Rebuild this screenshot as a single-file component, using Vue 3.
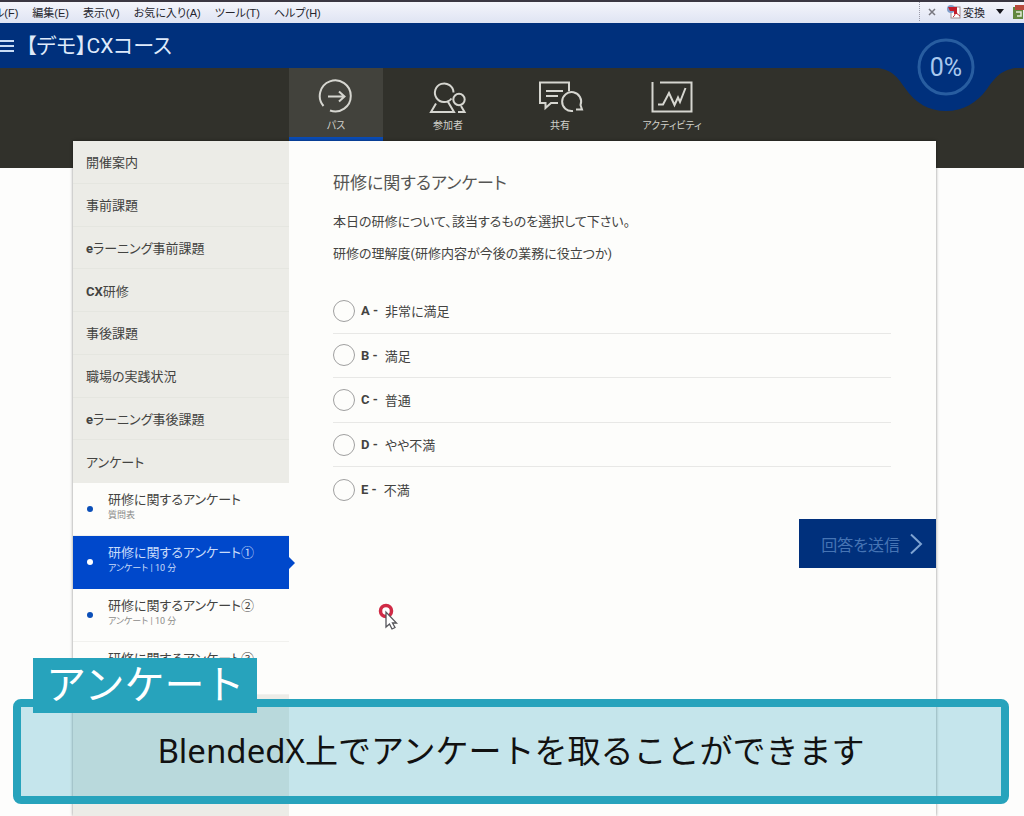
<script setup>
import { ref } from 'vue'

const menus = ['ル(F)', '編集(E)', '表示(V)', 'お気に入り(A)', 'ツール(T)', 'ヘルプ(H)']
const tabs = [
  { id: 'path', label: 'パス' },
  { id: 'people', label: '参加者' },
  { id: 'share', label: '共有' },
  { id: 'activity', label: 'アクティビティ' },
]
const sections = [
  { text: '開催案内' },
  { text: '事前課題' },
  { lead: 'e', text: 'ラーニング事前課題' },
  { lead: 'CX', text: '研修' },
  { text: '事後課題' },
  { text: '職場の実践状況' },
  { lead: 'e', text: 'ラーニング事後課題' },
  { text: 'アンケート' },
]
const lessons = [
  { title: '研修に関するアンケート', meta: '質問表' },
  { title: '研修に関するアンケート①', meta: 'アンケート | 10 分' },
  { title: '研修に関するアンケート②', meta: 'アンケート | 10 分' },
  { title: '研修に関するアンケート③', meta: '' },
]
const options = [
  { key: 'A', text: '非常に満足' },
  { key: 'B', text: '満足' },
  { key: 'C', text: '普通' },
  { key: 'D', text: 'やや不満' },
  { key: 'E', text: '不満' },
]
const activeTab = ref('path')
const activeLesson = ref(1)
const answer = ref('')
</script>

<template>
  <div class="page">
    <div class="menubar">
      <nav class="menus">
        <button v-for="m in menus" :key="m" type="button">{{ m }}</button>
      </nav>
      <div class="tools">
        <button type="button" class="close" aria-label="閉じる">
          <svg width="8" height="8" viewBox="0 0 8 8"><path d="M1 1L7 7M7 1L1 7" stroke="#77777f" stroke-width="1.5" /></svg>
        </button>
        <button type="button" class="convert">
          <svg width="16" height="16" viewBox="0 0 16 16">
            <rect x="5" y="3" width="9" height="11" fill="#fff" stroke="#a08c90" />
            <circle cx="5" cy="5" r="4" fill="#7f9fcb" />
            <path d="M2 3H11V10H8V7H4Z" fill="#c21d2b" />
            <path d="M7 13C10 11 9 7 10 6C10 9 12 11 14 12" fill="none" stroke="#c21d2b" />
          </svg>
          <span>変換</span>
        </button>
        <button type="button" class="drop" aria-label="メニュー">
          <svg width="8" height="5" viewBox="0 0 8 5"><path d="M0 0H8L4 5Z" fill="#15151c" /></svg>
        </button>
        <svg class="edge" width="12" height="16" viewBox="0 0 12 16">
          <rect x="1" y="3" width="10" height="12" fill="#62883f" />
          <path d="M3 1H12V6H3Z" fill="#b8493c" />
          <path d="M4 8H9V12H5" fill="none" stroke="#e4ead9" stroke-width="1.5" />
        </svg>
      </div>
    </div>

    <header class="header">
      <button type="button" class="burger" aria-label="メニューを開く">
        <svg width="14" height="14" viewBox="0 0 14 14"><path d="M0 2H14M0 7H14M0 12H14" stroke="#c9dcf4" stroke-width="2" /></svg>
      </button>
      <h1>【デモ】CXコース</h1>
    </header>

    <div class="band">
      <div class="progress">
        <svg width="156" height="76" viewBox="0 0 156 76">
          <path d="M0 0V32C22 33 27 40 36 53C46 68 60 76 77 76C94 76 108 68 118 54C128 40 134 33 156 32V0Z" fill="#00307c" />
          <circle cx="77" cy="32" r="27" fill="none" stroke="#285da0" stroke-width="3" />
        </svg>
        <span>0%</span>
      </div>
      <nav class="tabs">
        <button v-for="t in tabs" :key="t.id" type="button" :class="{ on: activeTab === t.id }" @click="activeTab = t.id">
          <svg v-if="t.id === 'path'" width="44" height="36" viewBox="0 0 44 36">
            <path d="M9.500 28A15.500 15.500 0 1 1 16 32.500M14 18.500H30M25 13.500L30.500 18.500L25 23.500" />
          </svg>
          <svg v-else-if="t.id === 'people'" width="44" height="36" viewBox="0 0 44 36">
            <path d="M25.500 20.500A9.300 9.300 0 1 1 27.500 14.500M10 25.500L5 34H28L21.500 23" />
            <circle cx="33" cy="21.500" r="5.700" />
            <path d="M35 28L38.500 34H32" />
          </svg>
          <svg v-else-if="t.id === 'share'" width="48" height="36" viewBox="0 0 48 36">
            <path d="M22 25H15L9.500 30V25H4V4.500H33V13M10 13H27M10 18H22" />
            <path d="M37 33A9.500 9.500 0 1 1 44.500 27L46 31.500H40" />
          </svg>
          <svg v-else width="44" height="36" viewBox="0 0 44 36">
            <path d="M2.500 4V33.500H41.500V4.500H10M8 26.500H13L19 15L24.500 27L28 19.500L30 24L35.500 10" />
          </svg>
          <span>{{ t.label }}</span>
        </button>
      </nav>
    </div>

    <main class="panel">
      <aside class="side">
        <ul class="sections">
          <li v-for="s in sections" :key="s.text"><a href="#"><b v-if="s.lead">{{ s.lead }}</b>{{ s.text }}</a></li>
        </ul>
        <ul class="lessons">
          <li v-for="(l, i) in lessons" :key="l.title" :class="{ on: activeLesson === i }">
            <a href="#" @click.prevent="activeLesson = i">
              <i class="dot"></i>
              <span class="txt"><span class="ttl">{{ l.title }}</span><span class="meta">{{ l.meta }}</span></span>
            </a>
          </li>
        </ul>
      </aside>
      <form class="survey" @submit.prevent>
        <div class="body">
          <h2>研修に関するアンケート</h2>
          <p>本日の研修について、該当するものを選択して下さい。</p>
          <p>研修の理解度(研修内容が今後の業務に役立つか)</p>
          <div class="options">
            <label v-for="o in options" :key="o.key">
              <input v-model="answer" type="radio" name="answer" :value="o.key" />
              <b>{{ o.key }} -</b>
              <span>{{ o.text }}</span>
            </label>
          </div>
        </div>
        <button type="submit" class="send">
          <span>回答を送信</span>
          <svg width="14" height="22" viewBox="0 0 14 22"><path d="M2 1.500L12 11L2 20.500" fill="none" stroke="#7ea3d2" stroke-width="2" /></svg>
        </button>
      </form>
    </main>

    <svg class="cursor" width="22" height="30" viewBox="0 0 22 30">
      <circle cx="8" cy="8" r="5.500" fill="#fff" stroke="#d02a45" stroke-width="3.500" />
      <path d="M8 9V24L11.500 21L14 26L17 24.500L14.500 20H18.500Z" fill="#fff" stroke="#55555a" stroke-width="1.300" />
    </svg>

    <div class="caption">
      <strong>アンケート</strong>
      <p>BlendedX上でアンケートを取ることができます</p>
    </div>
  </div>
</template>

<style>
body {
  background: #fdfdfc;
}
</style>

<style scoped>
.page {
  position: relative;
  display: flex;
  flex-direction: column;
  height: 100vh;
  overflow: hidden;
  font-family: Roboto, "Noto Sans CJK JP", sans-serif;
  font-feature-settings: "palt";
  font-size: 13px;
  color: #434341;
}
button {
  display: flex;
  align-items: center;
  margin: 0;
  padding: 0;
  border: 0;
  background: none;
  font: inherit;
  font-feature-settings: inherit;
  color: inherit;
}
a {
  color: inherit;
  text-decoration: none;
}
ul {
  margin: 0;
  padding: 0;
  list-style: none;
}
.menubar {
  display: flex;
  justify-content: space-between;
  flex: none;
  height: 23px;
  box-sizing: border-box;
  border-top: 2px solid #3b3742;
  padding-bottom: 2px;
  background: linear-gradient(#f4f5fb, #dfe4f3);
  font-family: "Liberation Sans", "Noto Sans CJK JP", sans-serif;
  font-size: 11px;
  color: #25252d;
}
.menus {
  display: flex;
  gap: 14px;
  margin-left: -6px;
}
.tools {
  display: flex;
  align-items: center;
  border-left: 1px dotted #9a9aa8;
  padding-left: 8px;
}
.convert {
  gap: 1px;
  margin-left: 10px;
}
.drop {
  margin-left: 11px;
}
.edge {
  margin-left: 8px;
}
.header {
  display: flex;
  align-items: center;
  flex: none;
  height: 45px;
  background: #00307c;
  color: #dfeafa;
}
.header h1 {
  margin: 0 0 0 12px;
  font-size: 21px;
  font-weight: 400;
  line-height: 28px;
}
.band {
  position: relative;
  flex: none;
  height: 100px;
  background: #31312b;
}
.progress {
  position: absolute;
  right: -1px;
  top: -33px;
  width: 156px;
  height: 76px;
}
.progress svg {
  display: block;
}
.progress span {
  position: absolute;
  left: 0;
  top: 17px;
  width: 154px;
  text-align: center;
  font-size: 25px;
  line-height: 32px;
  color: #a9c8ee;
}
.tabs {
  display: flex;
  gap: 18px;
  padding-left: 289px;
}
.tabs button {
  flex-direction: column;
  width: 94px;
  height: 73px;
  box-sizing: border-box;
  padding-top: 10px;
  border-bottom: 4px solid transparent;
  font-size: 10px;
  line-height: 16px;
  color: #d2d2cc;
  white-space: nowrap;
}
.tabs button span {
  margin-top: 4px;
}
.tabs button.on {
  background: #42423c;
  border-bottom-color: #0a4bb5;
}
.tabs svg {
  flex: none;
  fill: none;
  stroke: #d6d6d0;
  stroke-width: 2;
}
.panel {
  position: relative;
  display: flex;
  flex: 1;
  margin: -27px 88px 0 73px;
  background: #fdfdfb;
  box-shadow: 0 0 3px rgba(0, 0, 0, 0.45);
}
.side {
  flex: none;
  width: 216px;
  background: #ecece7;
}
.sections {
  display: grid;
  grid-auto-rows: 1fr;
  min-height: 342px;
}
.sections li {
  display: flex;
  align-items: center;
  padding-left: 13px;
  border-bottom: 1px solid #e5e6e0;
}
.sections li:last-child {
  border-bottom: 0;
}
.lessons li {
  position: relative;
  height: 53px;
  box-sizing: border-box;
  background: #fdfdfb;
  border-bottom: 1px solid #f1f1ee;
}
.lessons a {
  display: flex;
  align-items: center;
  gap: 15px;
  height: 100%;
  padding-left: 14px;
}
.dot {
  width: 6px;
  height: 6px;
  border-radius: 50%;
  background: #0b4fb8;
}
.txt {
  display: flex;
  flex-direction: column;
  padding-bottom: 6px;
}
.ttl {
  font-size: 13px;
  line-height: 18px;
}
.meta {
  min-height: 12px;
  font-size: 9px;
  line-height: 12px;
  color: #8c8c8a;
}
.lessons .on {
  background: #0048cb;
  border-color: #0048cb;
  color: #c9dcfa;
}
.lessons .on .meta {
  color: #c9dcfa;
}
.lessons .on .dot {
  background: #fff;
}
.lessons .on::after {
  content: "";
  position: absolute;
  left: 100%;
  top: 21px;
  border: 6px solid transparent;
  border-right-width: 0;
  border-left-color: #0048cb;
}
.survey {
  display: flex;
  flex-direction: column;
  flex: 1;
}
.body {
  padding: 29px 45px 7px 44px;
}
h2 {
  margin: 0 0 14px;
  font-size: 17px;
  font-weight: 400;
  line-height: 26px;
  color: #555553;
}
.body p {
  margin: 0 0 8px;
  line-height: 24px;
}
.options {
  display: grid;
  grid-auto-rows: 1fr;
  min-height: 223px;
  margin-top: 23px;
}
.options label {
  display: flex;
  align-items: center;
  border-bottom: 1px solid #e8e8e6;
}
.options label:last-child {
  border-bottom: 0;
}
.options input {
  appearance: none;
  width: 22px;
  height: 22px;
  margin: 0 6px 0 0;
  box-sizing: border-box;
  border: 1px solid #a0a0a0;
  border-radius: 50%;
  background: #fdfdfb;
}
.options input:checked {
  border: 6px solid #0048cb;
}
.options b {
  margin-right: 7px;
}
.send {
  align-self: flex-end;
  gap: 9px;
  height: 49px;
  padding: 0 13px 0 22px;
  background: #00307c;
  font-size: 16px;
  color: #4674b4;
}
.cursor {
  position: absolute;
  left: 378px;
  top: 603px;
}
.caption {
  position: absolute;
  left: 13px;
  right: 15px;
  bottom: 12px;
  height: 105px;
  box-sizing: border-box;
  border: 8px solid #27a3bc;
  border-radius: 8px;
  background: rgba(39, 163, 188, 0.26);
  font-family: "Noto Sans", "Noto Sans CJK JP", sans-serif;
  font-feature-settings: normal;
  color: #111;
}
.caption strong {
  position: absolute;
  left: 12px;
  top: -49px;
  padding: 0 13px 4px;
  background: #27a3bc;
  font-size: 40px;
  font-weight: 400;
  line-height: 51px;
  color: #fff;
}
.caption p {
  margin: 0;
  text-align: center;
  font-size: 33px;
  line-height: 88px;
}
</style>
